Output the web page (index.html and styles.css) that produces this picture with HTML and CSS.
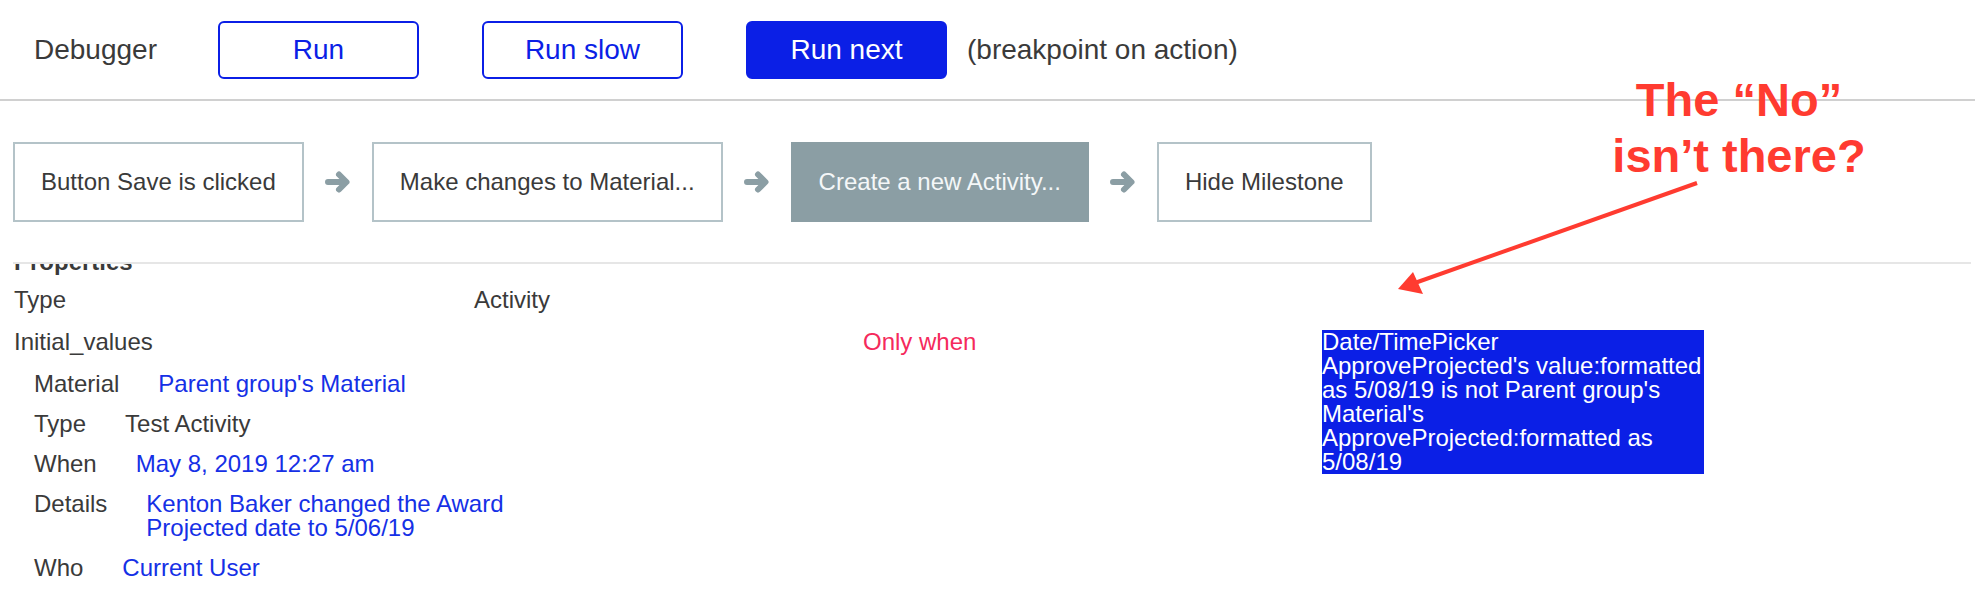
FILE: index.html
```html
<!DOCTYPE html>
<html lang="en">
<head>
  <meta charset="UTF-8">
  <title>Debugger</title>
  <link rel="stylesheet" href="styles.css">
</head>
<body>
  <header class="toolbar">
    <span class="toolbar-title">Debugger</span>
    <button class="btn">Run</button>
    <button class="btn">Run slow</button>
    <button class="btn btn-primary">Run next</button>
    <span class="toolbar-note">(breakpoint on action)</span>
  </header>

  <div class="workspace">
    <div class="flow">
      <div class="step">Button Save is clicked</div>
      <svg class="step-arrow" viewBox="0 0 26 24"><path d="M3 12 H21 M14 4.5 L21.5 12 L14 19.5"/></svg>
      <div class="step">Make changes to Material...</div>
      <svg class="step-arrow" viewBox="0 0 26 24"><path d="M3 12 H21 M14 4.5 L21.5 12 L14 19.5"/></svg>
      <div class="step step-current">Create a new Activity...</div>
      <svg class="step-arrow" viewBox="0 0 26 24"><path d="M3 12 H21 M14 4.5 L21.5 12 L14 19.5"/></svg>
      <div class="step">Hide Milestone</div>
    </div>

    <div class="props">
      <div class="props-heading">Properties</div>
      <div class="prop-row prop-type">
        <span class="prop-key">Type</span>
        <span>Activity</span>
      </div>
      <div class="prop-row prop-initial">
        <div class="initial-main">
          <div>Initial_values</div>
          <div class="sub-list">
            <div class="sub-row"><span>Material</span><span class="val">Parent group's Material</span></div>
            <div class="sub-row"><span>Type</span><span>Test Activity</span></div>
            <div class="sub-row"><span>When</span><span class="val">May 8, 2019 12:27 am</span></div>
            <div class="sub-row"><span>Details</span><span class="val val-wrap">Kenton Baker changed the Award Projected date to 5/06/19</span></div>
            <div class="sub-row"><span>Who</span><span class="val">Current User</span></div>
          </div>
        </div>
        <div class="cond">Only when</div>
        <div class="cond-value">Date/TimePicker ApproveProjected's value:formatted as 5/08/19 is not Parent group's Material's ApproveProjected:formatted as 5/08/19</div>
      </div>
    </div>
  </div>

  <div class="note">The “No”<br>isn’t there?</div>
  <svg class="note-arrow" width="1975" height="593" viewBox="0 0 1975 593">
    <line x1="1697" y1="183" x2="1412" y2="284"/>
    <polygon points="1398,289 1413,272 1423,294"/>
  </svg>
</body>
</html>
```

FILE: styles.css
```css
body {
  font-family: "Liberation Sans", Arial, sans-serif;
  margin: 0;
  height: 593px;
  overflow: hidden;
  color: #3a3a3a;
  background-color: white;
  position: relative;
}
.toolbar {
  display: flex;
  align-items: center;
  height: 99px;
  padding-left: 34px;
  border-bottom: 2px solid #d0d0d0;
  font-size: 28px;
}
.btn {
  font-family: inherit;
  font-size: 28px;
  width: 201px;
  height: 58px;
  margin-left: 63px;
  background-color: white;
  color: #0b1fe6;
  border: 2px solid #0b1fe6;
  border-radius: 6px;
  padding: 0;
}
.toolbar-title + .btn {
  margin-left: 61px;
}
.btn-primary {
  background-color: #0b1fe6;
  color: white;
}
.toolbar-note {
  margin-left: 20px;
}
.workspace {
  padding: 0 4px 0 13px;
}
.flow {
  display: flex;
  align-items: center;
  gap: 21px;
  padding: 41px 0 40px;
  border-bottom: 2px solid #e6e6e6;
}
.step {
  display: flex;
  align-items: center;
  box-sizing: border-box;
  height: 80px;
  padding: 0 26px;
  border: 2px solid #b4c3c8;
  font-size: 24px;
}
.step-current {
  background-color: #8b9ea4;
  border-color: #8b9ea4;
  color: #f4f7f8;
}
.step-arrow {
  width: 26px;
  height: 24px;
  fill: none;
  stroke: #8b9ea4;
  stroke-width: 6;
  stroke-linecap: round;
  stroke-linejoin: round;
}
.props {
  height: 329px;
  overflow: hidden;
  padding-left: 1px;
  font-size: 24px;
  line-height: 24px;
}
.props-heading {
  font-weight: bold;
  margin-top: -14px;
}
.prop-row {
  display: flex;
  align-items: flex-start;
}
.prop-type {
  margin-top: 14px;
}
.prop-key {
  width: 460px;
}
.prop-initial {
  margin-top: 18px;
}
.initial-main {
  width: 849px;
  flex: none;
}
.sub-list {
  display: flex;
  flex-direction: column;
  gap: 16px;
  margin-top: 18px;
  padding-left: 20px;
}
.sub-row {
  display: flex;
  align-items: flex-start;
  gap: 39px;
}
.val {
  color: #1530e6;
}
.val-wrap {
  max-width: 370px;
}
.cond {
  width: 459px;
  flex: none;
  color: #f52a5c;
}
.cond-value {
  width: 382px;
  flex: none;
  background-color: #0b1fe6;
  color: white;
}
.note {
  position: absolute;
  left: 1589px;
  top: 72px;
  width: 300px;
  text-align: center;
  font-size: 47px;
  line-height: 56px;
  font-weight: bold;
  color: #ff3b30;
}
.note-arrow {
  position: absolute;
  left: 0;
  top: 0;
  pointer-events: none;
}
.note-arrow line {
  stroke: #ff3b30;
  stroke-width: 4;
}
.note-arrow polygon {
  fill: #ff3b30;
}
```
